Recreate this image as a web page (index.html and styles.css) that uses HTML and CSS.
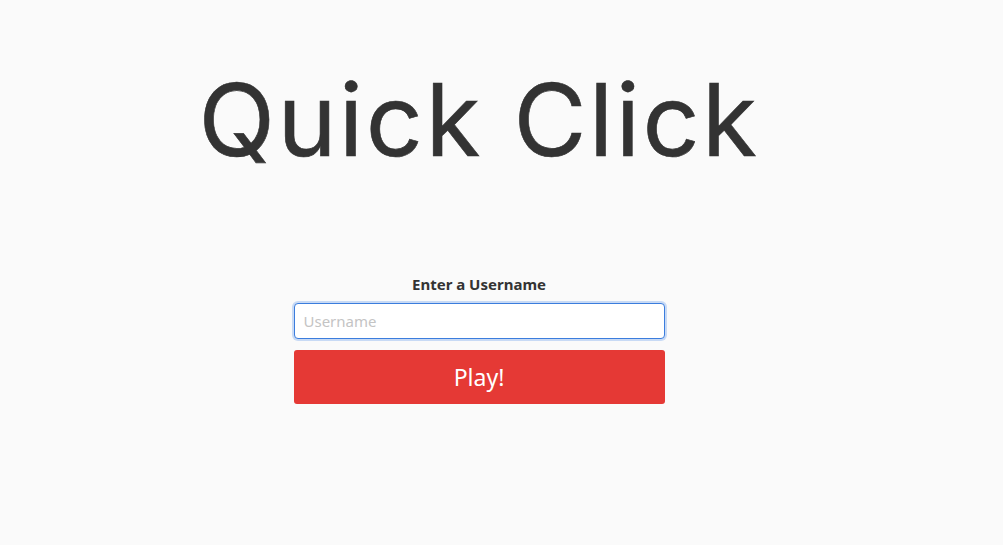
FILE: index.html
```html
<!DOCTYPE html>
<html lang="en">
<head>
<meta charset="utf-8">
<title>Quick Click</title>
<link rel="stylesheet" href="styles.css">
</head>
<body>
<main class="page">
  <h1 class="title">Quick Click</h1>
  <form class="login">
    <label class="label" for="username">Enter a Username</label>
    <input class="input" id="username" type="text" placeholder="Username" autofocus>
    <button class="play" type="button">Play!</button>
  </form>
</main>
</body>
</html>
```
FILE: styles.css
```css
html, body {
  margin: 0;
  padding: 0;
  background: #fafafa;
}
.page {
  width: 958px;
  display: flex;
  flex-direction: column;
  align-items: center;
  font-family: "Noto Sans", "Open Sans", sans-serif;
}
.title {
  margin: 58px 0 0;
  font-family: Inter, "Noto Sans", sans-serif;
  font-weight: 400;
  font-size: 100px;
  line-height: 124px;
  color: #333333;
  letter-spacing: 2.5px;
  -webkit-text-stroke: 0.6px #333333;
}
.login {
  margin-top: 92px;
  width: 371px;
  display: flex;
  flex-direction: column;
  align-items: stretch;
}
.label {
  text-align: center;
  font-weight: 700;
  font-size: 15px;
  line-height: 20px;
  color: #333333;
  margin-bottom: 9px;
}
.input {
  box-sizing: border-box;
  height: 36px;
  padding: 0 9px;
  border: 1px solid #3b7ddd;
  border-radius: 4px;
  box-shadow: 0 0 0 2px #c8daf5;
  background: #ffffff;
  font-family: "Noto Sans", sans-serif;
  font-size: 15px;
  color: #333;
  outline: none;
}
.input::placeholder {
  color: #c4c4c4;
}
.play {
  margin-top: 11px;
  height: 54px;
  border: none;
  border-radius: 3px;
  background: #e53935;
  color: #ffffff;
  font-family: "Noto Sans", sans-serif;
  font-size: 23px;
  cursor: pointer;
}
```
